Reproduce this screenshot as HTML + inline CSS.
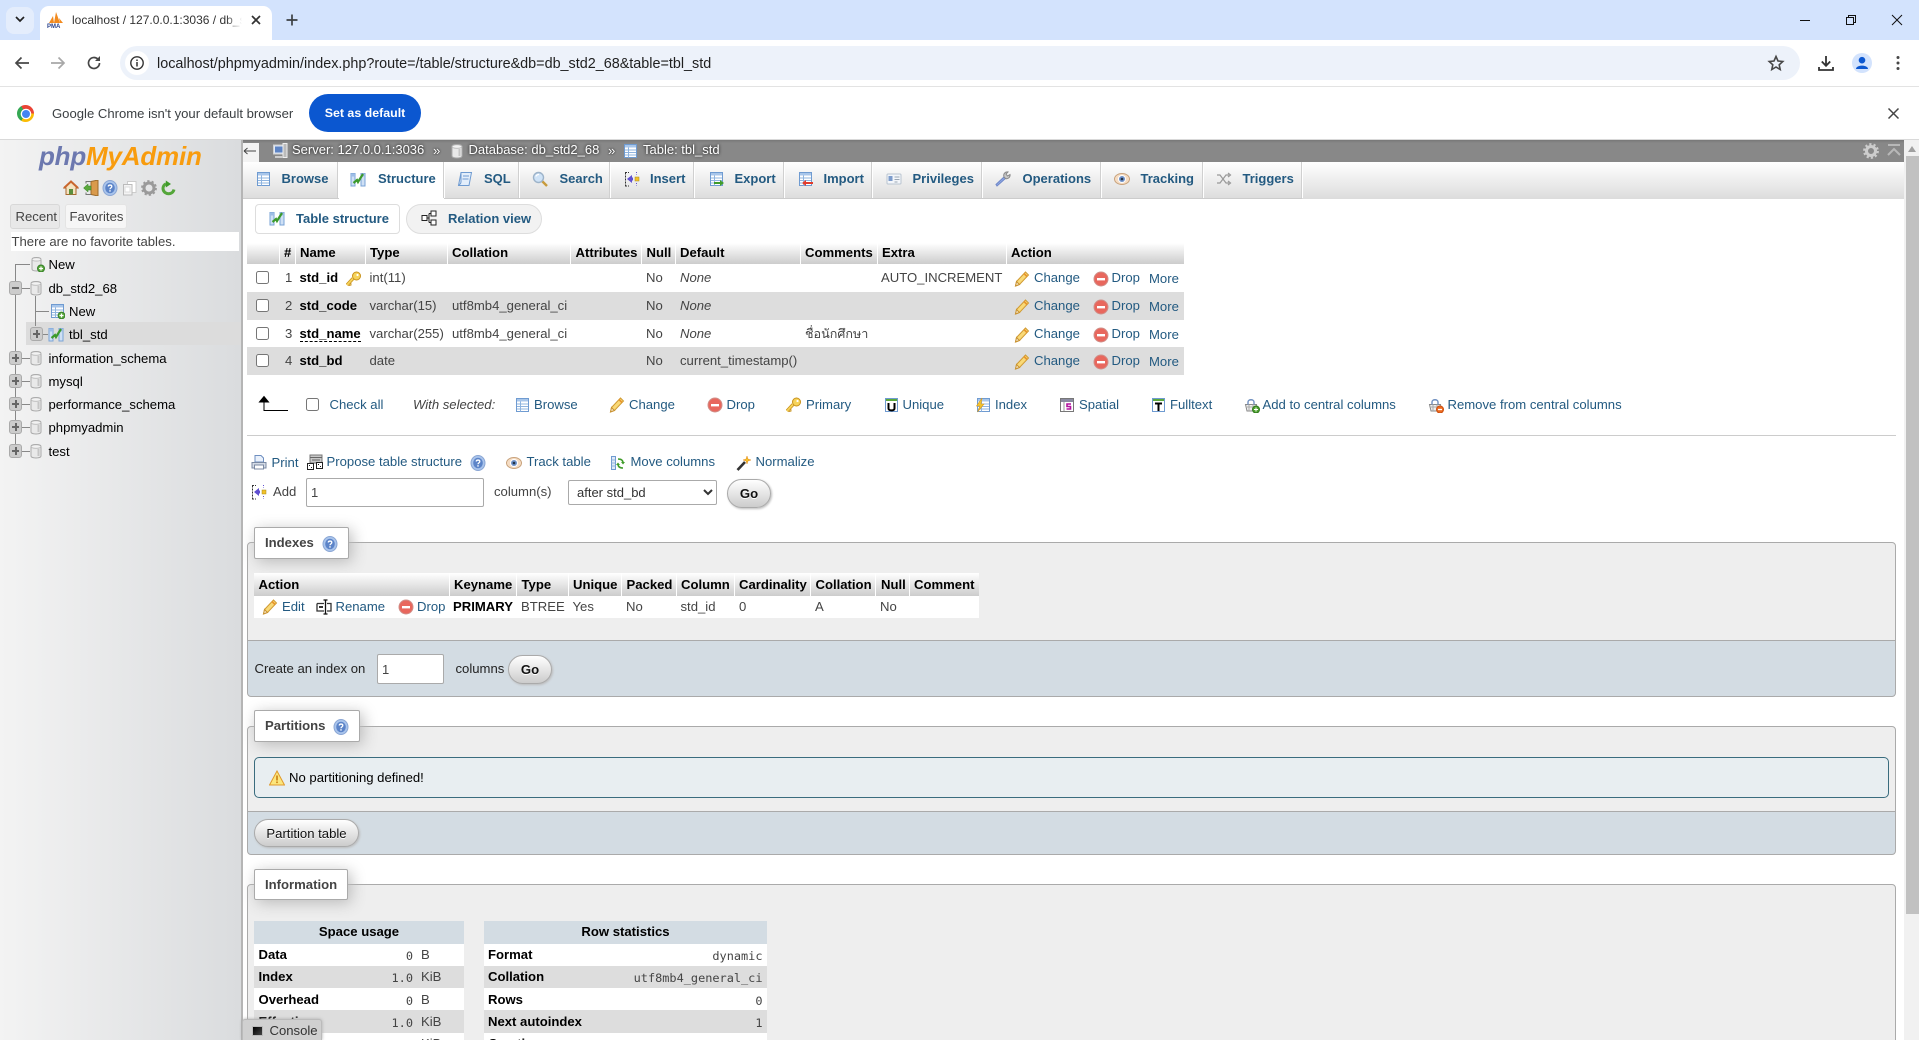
<!DOCTYPE html>
<html lang="en"><head><meta charset="utf-8"><title>localhost / 127.0.0.1:3036 / db_std2_68 / tbl_std</title>
<style>
html,body{margin:0;padding:0;width:1919px;height:1040px;overflow:hidden;background:#fff}
body{position:relative;font:13.12px/16px "Liberation Sans","Noto Sans CJK SC",sans-serif;color:#444}
.t,.r,.i,.b{position:absolute}
.t{white-space:nowrap;line-height:16px}
.l{color:#235a81}
.k{color:#000;font-weight:bold}
.m{font-family:"DejaVu Sans Mono","Liberation Mono",monospace;font-size:11.9px}
.i{width:16px;height:16px;overflow:visible}
.b{box-sizing:border-box}
.h{background:linear-gradient(#fff,#ccc)}
.s{background:#fff;width:1px}
.tb{font-weight:bold;color:#235a81;font-size:13px}
.sep{position:absolute;top:162px;height:36px;width:1px;background:#fff;box-shadow:-1px 0 0 #d0d0d0}
.fs{position:absolute;left:247px;width:1649px;box-sizing:border-box;background:#eee;border:1px solid #aaa;border-radius:4px 4px 0 0}
.ft{position:absolute;left:247px;width:1649px;box-sizing:border-box;background:#d3dce3;border:1px solid #aaa;border-radius:0 0 4px 4px}
.lg{position:absolute;box-sizing:border-box;background:#fff;border:1px solid #aaa;border-radius:2px;box-shadow:3px 3px 15px #bbb}
.btn{position:absolute;box-sizing:border-box;background:linear-gradient(#fff,#ccc);border:1px solid #aaa;border-radius:20px;color:#111;text-align:center;box-shadow:1px 1px 2px #bbb;text-shadow:0 1px 0 #fff}
input[type=checkbox]{position:absolute;margin:0;width:13px;height:13px}
input[type=text]{position:absolute;box-sizing:border-box;margin:0;border:1px solid #aaa;border-radius:2px;padding:0 0 0 4px;font:13px "Liberation Sans",sans-serif;color:#444;background:#fff}
select{position:absolute;box-sizing:border-box;margin:0;border:1px solid #aaa;border-radius:2px;padding:0 4px;font:13px "Liberation Sans",sans-serif;color:#333;background:#fff}
.hl{position:absolute;height:1px;background:#888}
.vl{position:absolute;width:1px;background:#888}
.pm{position:absolute;left:9px;width:13px;height:14px;box-sizing:border-box;background:#ccc;border:1px solid #aaa;border-radius:3px}
.pm:before{content:"";position:absolute;left:2px;right:2px;top:5px;height:2px;background:#666}
.pm.p:after{content:"";position:absolute;top:2px;bottom:2px;left:4.500px;width:2px;background:#666}
</style></head><body>
<svg width="0" height="0" style="position:absolute">
<defs>
<symbol id="pen" viewBox="0 0 16 16"><path d="M1.500 15 2.500 10.500 11.500 1 14.500 4 5.500 13.500Z" fill="#f9d977" stroke="#d09a32"/><path d="M1.500 15 2.500 10.500 5.500 13.500Z" fill="#f6e6c6" stroke="#c89232"/><path d="M10 2.500 13 5.500" stroke="#e8942a" stroke-width="1.600"/></symbol>
<symbol id="drop" viewBox="0 0 16 16"><circle cx="8" cy="8" r="7" fill="#e8675d" stroke="#d0908a"/><rect x="4" y="7" width="8" height="2.400" fill="#fff"/></symbol>
<symbol id="key" viewBox="0 0 16 16"><path d="M1 14 7 7.500" stroke="#c9921a" stroke-width="3.400"/><path d="M1 14 7 7.500" stroke="#f6d35b" stroke-width="1.800"/><circle cx="10.500" cy="5" r="4" fill="#f6d35b" stroke="#c9921a"/><circle cx="11.500" cy="4" r="1.100" fill="#fff"/><path d="M3 14.500 5 14 4.800 12" stroke="#c9921a" fill="none"/></symbol>
<symbol id="db" viewBox="0 0 16 16"><path d="M3 3.500C3 .8 13 .8 13 3.500V13C13 15.600 3 15.600 3 13Z" fill="#e9e9e9" stroke="#aaa"/><path d="M3 3.500C3 5.800 13 5.800 13 3.500" fill="#fafafa" stroke="#bbb"/><path d="M10.500 6V13" stroke="#c5c5c5" stroke-width="2"/></symbol>
<symbol id="dbn" viewBox="0 0 16 16"><path d="M3 3.500C3 .8 12 .8 12 3.500V13C12 15.600 3 15.600 3 13Z" fill="#e9e9e9" stroke="#aaa"/><path d="M3 3.500C3 5.500 12 5.500 12 3.500" fill="#fafafa" stroke="#bbb"/><circle cx="12" cy="12.500" r="3.500" fill="#5aa83c" stroke="#37812a"/><path d="M10 12.500h4M12 10.500v4" stroke="#fff" stroke-width="1.200"/></symbol>
<symbol id="grid" viewBox="0 0 16 16"><rect x="2.500" y="1.500" width="12" height="13" fill="#fff" stroke="#6f9bd1"/><rect x="3" y="2" width="11" height="2.500" fill="#a8c6ea"/><path d="M3 7h11M3 9.500h11M3 12h11M6.500 4.500v10" stroke="#8fb4df"/></symbol>
<symbol id="gridn" viewBox="0 0 16 16"><use href="#grid"/><circle cx="12.500" cy="12.500" r="3.400" fill="#5aa83c" stroke="#37812a"/><path d="M10.500 12.500h4M12.500 10.500v4" stroke="#fff" stroke-width="1.200"/></symbol>
<symbol id="str" viewBox="0 0 16 16"><path d="M1 2.500h4V15H1zM11 2.500h4V15h-4z" fill="#cfe0f5" stroke="#7aa3d6"/><path d="M1 2.500h4v3H1zM11 2.500h4v3h-4z" fill="#9dbde6"/><path d="M3.500 12 7 9 8 11 13 3" fill="none" stroke="#3c9a2c" stroke-width="2.200"/></symbol>
<symbol id="sql" viewBox="0 0 16 16"><path d="M4 1.500H14.500L12 14.500H1.500Z" fill="#e3eefb" stroke="#6f9bd1"/><path d="M1.500 14.500C3 13 4 13 4 11L4 1.500M6 5h6M5.500 8h6" fill="none" stroke="#6f9bd1"/></symbol>
<symbol id="find" viewBox="0 0 16 16"><path d="M9.500 9.500 15 15" stroke="#c89b3c" stroke-width="2.400"/><circle cx="6.500" cy="6.500" r="5" fill="#cfe3f7" stroke="#9db3c9" stroke-width="1.400"/><path d="M3.800 5.500C4.500 4 6 3.500 7 3.500" stroke="#fff" fill="none" stroke-width="1.200"/></symbol>
<symbol id="ins" viewBox="0 0 16 16"><path d="M1 1.500h4M1 15h4M1.500 1.500V15" fill="none" stroke="#333" stroke-dasharray="2 1"/><path d="M3 8 8 4v2.500h1v3H8V12Z" fill="#5f4fd0"/><rect x="11" y="6" width="4" height="4" fill="#f1c12a" stroke="#a8891a" stroke-width=".5"/><path d="M12.500 1v2.500M12.500 12v2.500" stroke="#5f4fd0" stroke-dasharray="1 1"/></symbol>
<symbol id="exp" viewBox="0 0 16 16"><use href="#grid"/><path d="M6 11h6V9l4 3-4 3v-2H6z" fill="#3f9b2a"/></symbol>
<symbol id="imp" viewBox="0 0 16 16"><use href="#grid"/><path d="M16 11h-7V9l-4 3 4 3v-2h7z" fill="#e03c2d"/></symbol>
<symbol id="priv" viewBox="0 0 16 16"><rect x="1" y="3" width="14" height="10" rx="1" fill="#f3f6fa" stroke="#b9c4d0"/><rect x="2.500" y="5" width="4" height="5" fill="#7d9ccc"/><path d="M8.500 6h5M8.500 8.500h5M8.500 11h3" stroke="#9aa6b4"/></symbol>
<symbol id="ops" viewBox="0 0 16 16"><path d="M2 15 1 13.500 9.500 5.500 11 7Z" fill="#8fa8e3" stroke="#6f87c8"/><path d="M9 6C8 3 10 .5 13 1L11 3 12.500 5 15 3.500C15.500 6 13 8.500 10.500 7.500Z" fill="#c8c8c8" stroke="#888"/></symbol>
<symbol id="eye" viewBox="0 0 16 16"><ellipse cx="8" cy="8" rx="7.500" ry="5.500" fill="#f5dcc3" stroke="#c8a27c"/><circle cx="8" cy="8" r="4" fill="#fff"/><circle cx="8" cy="8" r="3" fill="#6d90c8"/><circle cx="8" cy="8" r="1.300" fill="#234"/></symbol>
<symbol id="trg" viewBox="0 0 16 16"><path d="M1 4h3l6 8h3M1 12h3l6-8h3M12 2l2.500 2L12 6M12 10l2.500 2-2.500 2" fill="none" stroke="#999" stroke-width="1.200"/></symbol>
<symbol id="help" viewBox="0 0 16 16"><ellipse cx="8" cy="8" rx="7" ry="7.500" fill="#a9c4ec" stroke="#8aa6d4"/><ellipse cx="8" cy="8" rx="4.800" ry="5.300" fill="#5c84c8"/><path d="M6.300 6.500C6.300 4.600 9.800 4.600 9.800 6.500 9.800 8 8 7.800 8 9.300" fill="none" stroke="#fff" stroke-width="1.300"/><rect x="7.300" y="10.200" width="1.400" height="1.400" fill="#fff"/></symbol>
<symbol id="move" viewBox="0 0 16 16"><path d="M1.500 1.500h4v13h-4z" fill="#dfe9f7" stroke="#6f9bd1"/><path d="M1.500 5h4M1.500 8h4M1.500 11h4" stroke="#8fb4df"/><path d="M8 4c4 0 5 2 5 4M13 13c-3 0-5-1-5-4" fill="none" stroke="#3f9b2a" stroke-width="1.600"/><path d="M11 7l2 2.500L15 7M6 10l2-2.500L10 10" fill="#3f9b2a"/></symbol>
<symbol id="wand" viewBox="0 0 16 16"><path d="M1.500 15 9 7" stroke="#333" stroke-width="2.600"/><path d="M11 1l1 3 3 1-3 1-1 3-1-3-3-1 3-1z" fill="#f5c02c" stroke="#e28a1c" stroke-width=".5"/></symbol>
<symbol id="print" viewBox="0 0 16 16"><path d="M4 1.500h6l2.500 2.500V8h-8.500Z" fill="#eaf1fb" stroke="#6f8fc0"/><path d="M1 8.500h14V14H1Z" fill="#d4dbe6" stroke="#7b8aa3"/><rect x="3.500" y="11" width="9" height="4" fill="#fff" stroke="#7b8aa3"/></symbol>
<symbol id="prop" viewBox="0 0 16 16"><rect x="3" y="1" width="12" height="8" fill="#c8c8c8" stroke="#777"/><path d="M3 3.500h12M5 6h8" stroke="#666"/><rect x=".5" y="9.500" width="6" height="6" fill="#fff" stroke="#222"/><rect x="9.500" y="8.500" width="6" height="6" fill="#fff" stroke="#222"/><path d="M2 11h1v1H2zM4 13h1v1H4zM11 10h1v1h-1zM13 12h1v1h-1z" fill="#222"/></symbol>
<symbol id="ren" viewBox="0 0 16 16"><path d="M1 4.500h7M8 12H1V4.500M11 4.500h4V12h-4" fill="none" stroke="#333" stroke-width="1.300"/><path d="M9.500 1.500V15M7.500 1h4M7.500 15h4" stroke="#111" stroke-width="1.300" fill="none"/><path d="M3 8h4" stroke="#333" stroke-width="2"/></symbol>
<symbol id="uni" viewBox="0 0 16 16"><rect x="2.500" y="1.500" width="12" height="13" fill="#fff" stroke="#6f9bd1"/><rect x="3" y="2" width="11" height="2" fill="#5aa83c"/><path d="M5.500 6v5.500c0 2.500 6 2.500 6 0V6" fill="none" stroke="#000" stroke-width="2"/></symbol>
<symbol id="idx" viewBox="0 0 16 16"><use href="#grid"/><path d="M7 1 1.500 9H5L2.500 15 9 7H6Z" fill="#f3c52f" stroke="#d89a1d" stroke-width=".6"/></symbol>
<symbol id="spa" viewBox="0 0 16 16"><rect x="1.500" y="1.500" width="13" height="13" fill="#fff" stroke="#777"/><rect x="2" y="2" width="12" height="3" fill="#8a8aa0"/><path d="M12 7H8v2.500h3.500V12H7.500" fill="none" stroke="#b3129f" stroke-width="1.600"/><path d="M5 5v9" stroke="#999"/></symbol>
<symbol id="ful" viewBox="0 0 16 16"><rect x="2.500" y="1.500" width="12" height="13" fill="#fff" stroke="#6f9bd1"/><rect x="3" y="2" width="11" height="2" fill="#5aa83c"/><path d="M5 6.500h7M8.500 6.500V14" stroke="#000" stroke-width="2"/></symbol>
<symbol id="bag" viewBox="0 0 16 16"><path d="M1.500 7.500h11L11 14H3Z" fill="#eee" stroke="#888"/><path d="M4 7.500V5C4 2 10 2 10 5V7.500" fill="none" stroke="#6f8fc0" stroke-width="1.400"/><path d="M3 10h9M5 7.500V14M9 7.500V14" stroke="#aaa"/></symbol>
<symbol id="baga" viewBox="0 0 16 16"><use href="#bag"/><circle cx="12" cy="12.500" r="3.500" fill="#4ea02e" stroke="#2f7a1e"/><path d="M10 12.500h4M12 10.500v4" stroke="#fff"/></symbol>
<symbol id="bagr" viewBox="0 0 16 16"><use href="#bag"/><circle cx="12" cy="12.500" r="3.500" fill="#ee6a1f" stroke="#c94f10"/><path d="M10 12.500h4" stroke="#fff" stroke-width="1.300"/></symbol>
<symbol id="warn" viewBox="0 0 16 16"><path d="M8 1 15.500 15H.5Z" fill="#fbe67d" stroke="#e0992a"/><rect x="7.200" y="5.500" width="1.600" height="5" fill="#c97d12"/><rect x="7.200" y="11.500" width="1.600" height="1.600" fill="#c97d12"/></symbol>
<symbol id="home" viewBox="0 0 16 16"><path d="M8 1.500 1 8h2v6.500h10V8h2Z" fill="#f4e3c2" stroke="#a9682f"/><path d="M1 8 8 1.500 15 8" fill="none" stroke="#c9662d" stroke-width="2"/><rect x="6" y="9" width="4" height="5.500" fill="#5a8f3c"/></symbol>
<symbol id="exit" viewBox="0 0 16 16"><path d="M8 1.500 15 0V16L8 14.500Z" fill="#d99a4c" stroke="#9a6a2c"/><path d="M.5 8 5 4v2h3v4H5v2Z" fill="#5aa83c" stroke="#37812a" stroke-width=".5"/><path d="M3 3.500V1.500h5M3 12.500v2h5" stroke="#777" fill="none"/></symbol>
<symbol id="doc" viewBox="0 0 16 16"><path d="M5.500 1.500H14V12.500H5.500Z" fill="#fff" stroke="#ccc"/><path d="M1.500 4.500H10V15H1.500Z" fill="#f4f4f4" stroke="#bbb"/><path d="M3 7h5v5H3z" fill="#fff" stroke="#ddd"/></symbol>
<symbol id="gear" viewBox="0 0 16 16"><circle cx="8" cy="8" r="5" fill="none" stroke="#9a9a9a" stroke-width="3"/><circle cx="8" cy="8" r="6.800" fill="none" stroke="#9a9a9a" stroke-width="2.200" stroke-dasharray="2.200 2.100"/></symbol>
<symbol id="rel" viewBox="0 0 16 16"><path d="M13 9.500C12 13.500 7.500 15 4 12.500 1 9.800 1.500 5.500 5 3.800" fill="none" stroke="#54a63a" stroke-width="3"/><path d="M4.800 .5 10 4 4.800 7.500Z" fill="#3f9b2a"/></symbol>
<symbol id="srv" viewBox="0 0 16 16"><rect x="1.500" y="2" width="11" height="9" fill="#dfe9f6" stroke="#d0d0d0"/><rect x="3" y="3.500" width="8" height="6" fill="#5e84c4"/><rect x="11" y=".5" width="4" height="14" fill="#bbb" stroke="#eee"/><path d="M3 13h8v2H3z" fill="#ccc"/></symbol>
<symbol id="rv" viewBox="0 0 16 16"><rect x="1" y="5.500" width="5" height="5" fill="#fff" stroke="#222"/><rect x="10" y="1" width="5" height="5" fill="#fff" stroke="#222"/><rect x="10" y="10" width="5" height="5" fill="#fff" stroke="#222"/><path d="M6 8h2M8 3.500V12.500M8 3.500h2M8 12.500h2" stroke="#222" fill="none"/></symbol>
</defs></svg>

<!-- Chrome frame -->
<div class="b" style="left:0;top:0;width:1919px;height:40px;background:#d3e3fd"></div>
<div class="b" style="left:6px;top:7px;width:28px;height:27px;background:#e4edfc;border-radius:8px"></div>
<svg class="i" style="left:14px;top:15px;width:12px;height:10px"><path d="M2 2 6 6 10 2" fill="none" stroke="#222" stroke-width="1.700"/></svg>
<div class="b" style="left:40px;top:6px;width:232px;height:36px;background:#fff;border-radius:9px 9px 0 0"></div>
<svg class="i" style="left:47px;top:12px;width:18px;height:16px" viewBox="0 0 18 16"><path d="M2 11 6 4 7 11ZM7 11 9 0 13 11ZM13 11 12 6 16 11Z" fill="#f28a1e"/><text x="0" y="16" font-size="6" font-weight="bold" fill="#27408b" font-family="Liberation Sans">PMA</text></svg>
<span class="t" style="left:72px;top:12px;font-size:12px;color:#333;width:170px;overflow:hidden">localhost / 127.0.0.1:3036 / db_std2_68 / tbl</span>
<div class="b" style="left:226px;top:10px;width:16px;height:20px;background:linear-gradient(to right,rgba(255,255,255,0),#fff)"></div>
<svg class="i" style="left:250px;top:14px;width:12px;height:12px"><path d="M2 2 10 10M10 2 2 10" stroke="#333" stroke-width="1.700"/></svg>
<svg class="i" style="left:286px;top:14px;width:12px;height:12px"><path d="M6 .5V11.500M.5 6H11.500" stroke="#3c4043" stroke-width="1.700"/></svg>
<svg class="i" style="left:1799px;top:15px;width:12px;height:10px"><path d="M1 5.500H11" stroke="#111"/></svg>
<svg class="i" style="left:1845px;top:14px;width:12px;height:12px"><path d="M1.500 3.500H8.500V10.500H1.500ZM3.500 3.500V1.500H10.500V8.500H8.500" fill="none" stroke="#111"/></svg>
<svg class="i" style="left:1891px;top:14px;width:12px;height:12px"><path d="M1 1 11 11M11 1 1 11" stroke="#111"/></svg>

<div class="b" style="left:0;top:40px;width:1919px;height:47px;background:#fff;border-radius:9px 9px 0 0;border-bottom:1px solid #e3e3e3"></div>
<svg class="i" style="left:14px;top:55px"><path d="M15 8H2M7.500 2.500 2 8 7.500 13.500" fill="none" stroke="#474747" stroke-width="1.700"/></svg>
<svg class="i" style="left:50px;top:55px"><path d="M1 8H14M8.500 2.500 14 8 8.500 13.500" fill="none" stroke="#a8a8a8" stroke-width="1.700"/></svg>
<svg class="i" style="left:86px;top:55px"><path d="M13.500 8A5.500 5.500 0 1 1 11.800 4" fill="none" stroke="#474747" stroke-width="1.700"/><path d="M14 1V6H9" fill="#474747"/></svg>
<div class="b" style="left:120px;top:46px;width:1680px;height:34px;background:#edf2fa;border-radius:17px"></div>
<div class="b" style="left:125px;top:51px;width:24px;height:24px;background:#fff;border-radius:12px"></div>
<svg class="i" style="left:129px;top:55px"><circle cx="8" cy="8" r="6.200" fill="none" stroke="#333" stroke-width="1.400"/><path d="M8 7V11.500M8 4.500V6" stroke="#333" stroke-width="1.500"/></svg>
<span class="t" style="left:157px;top:56px;font-size:14.390px;color:#1f1f1f">localhost/phpmyadmin/index.php?route=/table/structure&amp;db=db_std2_68&amp;table=tbl_std</span>
<svg class="i" style="left:1768px;top:55px"><path d="M8 1.500 10 6 14.800 6.500 11.200 9.800 12.200 14.500 8 12 3.800 14.500 4.800 9.800 1.200 6.500 6 6Z" fill="none" stroke="#474747" stroke-width="1.600"/></svg>
<svg class="i" style="left:1818px;top:55px"><path d="M8 1V10.500M3.800 6.500 8 10.800 12.200 6.500M1 12V15H15V12" fill="none" stroke="#333" stroke-width="1.800"/></svg>
<div class="b" style="left:1852px;top:53px;width:20px;height:20px;background:#d3e3fd;border-radius:10px"></div>
<svg class="i" style="left:1854px;top:55px"><circle cx="8" cy="5.200" r="3.300" fill="#0b57d0"/><path d="M2 14C2 9.500 14 9.500 14 14Z" fill="#0b57d0"/></svg>
<svg class="i" style="left:1890px;top:55px"><circle cx="8" cy="2.500" r="1.500" fill="#474747"/><circle cx="8" cy="8" r="1.500" fill="#474747"/><circle cx="8" cy="13.500" r="1.500" fill="#474747"/></svg>

<!-- Infobar -->
<div class="b" style="left:0;top:87px;width:1919px;height:53px;background:#fff;border-bottom:1px solid #d9d9d9"></div>
<div class="b" style="left:17px;top:105px;width:17px;height:17px;border-radius:50%;background:conic-gradient(#ea4335 0 90deg,#fbbc04 90deg 210deg,#34a853 210deg 330deg,#ea4335 330deg)"></div>
<div class="b" style="left:21.500px;top:109.500px;width:8px;height:8px;border-radius:50%;background:#4285f4;box-shadow:0 0 0 1.300px #fff"></div>
<span class="t" style="left:52px;top:106px;font-size:13.100px;color:#3c4043">Google Chrome isn't your default browser</span>
<div class="b" style="left:309px;top:94px;width:112px;height:38px;background:#0b57d0;border-radius:19px;color:#fff;font-weight:bold;font-size:12.400px;line-height:38px;text-align:center">Set as default</div>
<svg class="i" style="left:1887px;top:107px;width:13px;height:13px"><path d="M1.500 1.500 11.500 11.500M11.500 1.500 1.500 11.500" stroke="#444" stroke-width="1.500"/></svg>

<!-- Navigation panel -->
<div class="b" style="left:0;top:140px;width:241px;height:900px;background:linear-gradient(to right,#f3f3f3,#dadcde)"></div>
<div class="b" style="left:241px;top:140px;width:2px;height:900px;background:#b5b5b5"></div>
<span class="t" style="left:39px;top:142px;font:italic bold 26px/28px 'Liberation Sans',sans-serif;color:#6c78af;letter-spacing:-.2px">php<span style="color:#f89c0e">MyAdmin</span></span>
<svg class="i" style="left:63px;top:180px"><use href="#home"/></svg>
<svg class="i" style="left:83px;top:180px"><use href="#exit"/></svg>
<svg class="i" style="left:102px;top:180px"><use href="#help"/></svg>
<svg class="i" style="left:122px;top:180px"><use href="#doc"/></svg>
<svg class="i" style="left:141px;top:180px"><use href="#gear"/></svg>
<svg class="i" style="left:161px;top:180px"><use href="#rel"/></svg>
<div class="b" style="left:10px;top:204px;width:50px;height:25px;background:#e8e8e8;border:1px solid #d8d8d8;border-radius:3px"></div>
<span class="t" style="left:15.500px;top:209px">Recent</span>
<div class="b" style="left:65px;top:204px;width:62px;height:25px;background:#f6f6f6;border:1px solid #e4e4e4;border-radius:3px"></div>
<span class="t" style="left:69.500px;top:209px">Favorites</span>
<div class="b" style="left:11px;top:232px;width:228px;height:19px;background:#fff"></div>
<span class="t" style="left:11.500px;top:234px">There are no favorite tables.</span>

<div class="b" style="left:26px;top:322px;width:215px;height:23px;background:#dcdcdc"></div>
<div class="vl" style="left:15px;top:264px;height:187px"></div>
<div class="hl" style="left:15px;top:264px;width:15px"></div>
<div class="hl" style="left:22px;top:288px;width:8px"></div>
<div class="hl" style="left:22px;top:358px;width:8px"></div>
<div class="hl" style="left:22px;top:381px;width:8px"></div>
<div class="hl" style="left:22px;top:404px;width:8px"></div>
<div class="hl" style="left:22px;top:427px;width:8px"></div>
<div class="hl" style="left:22px;top:451px;width:8px"></div>
<div class="vl" style="left:35px;top:296px;height:30px"></div>
<div class="hl" style="left:35px;top:311px;width:14px"></div>
<div class="hl" style="left:42px;top:334px;width:6px"></div>
<div class="pm" style="top:281px"></div>
<div class="pm p" style="left:30px;top:327px"></div>
<div class="pm p" style="top:351px"></div>
<div class="pm p" style="top:374px"></div>
<div class="pm p" style="top:397px"></div>
<div class="pm p" style="top:420px"></div>
<div class="pm p" style="top:444px"></div>
<svg class="i" style="left:29px;top:256px"><use href="#dbn"/></svg><span class="t" style="left:48.500px;top:257px;color:#000">New</span>
<svg class="i" style="left:28px;top:280px"><use href="#db"/></svg><span class="t" style="left:48.500px;top:281px;color:#000">db_std2_68</span>
<svg class="i" style="left:49px;top:303px"><use href="#gridn"/></svg><span class="t" style="left:69px;top:304px;color:#000">New</span>
<svg class="i" style="left:48px;top:326px"><use href="#str"/></svg><span class="t" style="left:69px;top:327px;color:#000">tbl_std</span>
<svg class="i" style="left:28px;top:350px"><use href="#db"/></svg><span class="t" style="left:48.500px;top:351px;color:#000">information_schema</span>
<svg class="i" style="left:28px;top:373px"><use href="#db"/></svg><span class="t" style="left:48.500px;top:374px;color:#000">mysql</span>
<svg class="i" style="left:28px;top:396px"><use href="#db"/></svg><span class="t" style="left:48.500px;top:397px;color:#000">performance_schema</span>
<svg class="i" style="left:28px;top:419px"><use href="#db"/></svg><span class="t" style="left:48.500px;top:420px;color:#000">phpmyadmin</span>
<svg class="i" style="left:28px;top:443px"><use href="#db"/></svg><span class="t" style="left:48.500px;top:444px;color:#000">test</span>

<!-- Breadcrumb -->
<div class="b" style="left:243px;top:140px;width:1661px;height:22px;background:linear-gradient(#777 0,#888 3px)"></div>
<div class="b" style="left:243px;top:143px;width:16px;height:19px;background:#f3f3f3"></div>
<svg class="i" style="left:243px;top:146px;width:16px;height:10px"><path d="M1 5H13M1 5 4.500 2M1 5 4.500 8" fill="none" stroke="#444"/></svg>
<svg class="i" style="left:272px;top:143px"><use href="#srv"/></svg>
<span class="t" style="left:292px;top:142px;color:#fff;text-shadow:0 0 3px #000;font-size:13px">Server: 127.0.0.1:3036</span>
<span class="t" style="left:433px;top:143px;color:#fff;text-shadow:0 0 2px #000">»</span>
<svg class="i" style="left:449px;top:143px"><use href="#db"/></svg>
<span class="t" style="left:468.500px;top:142px;color:#fff;text-shadow:0 0 3px #000;font-size:13px">Database: db_std2_68</span>
<span class="t" style="left:608px;top:143px;color:#fff;text-shadow:0 0 2px #000">»</span>
<svg class="i" style="left:622px;top:143px"><use href="#grid"/></svg>
<span class="t" style="left:643px;top:142px;color:#fff;text-shadow:0 0 3px #000;font-size:13px">Table: tbl_std</span>
<svg class="i" style="left:1863px;top:143px;opacity:.9"><circle cx="8" cy="8" r="4.500" fill="none" stroke="#d5d5d5" stroke-width="3"/><circle cx="8" cy="8" r="6.800" fill="none" stroke="#d5d5d5" stroke-width="2.200" stroke-dasharray="2.200 2.100"/></svg>
<svg class="i" style="left:1886px;top:143px"><path d="M2 2H14M2 12 8 6 14 12" fill="none" stroke="#b8b8b8" stroke-width="2"/></svg>

<!-- Scrollbar -->
<div class="b" style="left:1904px;top:140px;width:15px;height:900px;background:#f1f1f1"></div>
<div class="b" style="left:1906px;top:156px;width:13px;height:758px;background:#c1c1c1"></div>
<svg class="i" style="left:1907px;top:145px;width:10px;height:8px"><path d="M1 7 5 1 9 7Z" fill="#a0a0a0"/></svg>

<!-- Top tabs -->
<div class="b" style="left:243px;top:162px;width:1661px;height:37px;background:linear-gradient(#fff,#dcdcdc)"></div>
<div class="b" style="left:243px;top:198px;width:1059px;height:1px;background:#ccc"></div>
<div class="b" style="left:339px;top:162px;width:105px;height:37px;background:#fff"></div>
<div class="sep" style="left:338px"></div><div class="sep" style="left:444px"></div><div class="sep" style="left:519px"></div><div class="sep" style="left:610px"></div><div class="sep" style="left:694px"></div><div class="sep" style="left:784px"></div><div class="sep" style="left:872px"></div><div class="sep" style="left:982px"></div><div class="sep" style="left:1101px"></div><div class="sep" style="left:1203px"></div><div class="sep" style="left:1302px"></div>
<svg class="i" style="left:255px;top:171px"><use href="#grid"/></svg><span class="t tb" style="left:281.500px;top:171px">Browse</span>
<svg class="i" style="left:350px;top:171px"><use href="#str"/></svg><span class="t tb" style="left:378px;top:171px">Structure</span>
<svg class="i" style="left:457px;top:171px"><use href="#sql"/></svg><span class="t tb" style="left:484px;top:171px">SQL</span>
<svg class="i" style="left:532px;top:171px"><use href="#find"/></svg><span class="t tb" style="left:559.500px;top:171px">Search</span>
<svg class="i" style="left:624px;top:171px"><use href="#ins"/></svg><span class="t tb" style="left:650px;top:171px">Insert</span>
<svg class="i" style="left:708px;top:171px"><use href="#exp"/></svg><span class="t tb" style="left:734.500px;top:171px">Export</span>
<svg class="i" style="left:797px;top:171px"><use href="#imp"/></svg><span class="t tb" style="left:823.500px;top:171px">Import</span>
<svg class="i" style="left:886px;top:171px"><use href="#priv"/></svg><span class="t tb" style="left:912.500px;top:171px">Privileges</span>
<svg class="i" style="left:995px;top:171px"><use href="#ops"/></svg><span class="t tb" style="left:1022.500px;top:171px">Operations</span>
<svg class="i" style="left:1114px;top:171px"><use href="#eye"/></svg><span class="t tb" style="left:1140.500px;top:171px">Tracking</span>
<svg class="i" style="left:1216px;top:171px"><use href="#trg"/></svg><span class="t tb" style="left:1242.500px;top:171px">Triggers</span>

<!-- Sub tabs -->
<div class="b" style="left:255px;top:204px;width:145px;height:30px;background:#fff;border:1px solid #ddd;border-radius:4px"></div>
<svg class="i" style="left:269px;top:210px"><use href="#str"/></svg><span class="t tb" style="left:296px;top:211px">Table structure</span>
<div class="b" style="left:406px;top:204px;width:136px;height:30px;background:#f2f2f2;border:1px solid #ddd;border-radius:15px"></div>
<svg class="i" style="left:421px;top:210px"><use href="#rv"/></svg><span class="t tb" style="left:448px;top:211px">Relation view</span>

<!-- Structure table -->
<div class="b h" style="left:247px;top:243px;width:937px;height:21px"></div>
<div class="b s" style="left:279px;top:243px;height:21px"></div><div class="b s" style="left:295px;top:243px;height:21px"></div><div class="b s" style="left:365px;top:243px;height:21px"></div><div class="b s" style="left:447px;top:243px;height:21px"></div><div class="b s" style="left:570px;top:243px;height:21px"></div><div class="b s" style="left:641px;top:243px;height:21px"></div><div class="b s" style="left:675px;top:243px;height:21px"></div><div class="b s" style="left:800px;top:243px;height:21px"></div><div class="b s" style="left:877px;top:243px;height:21px"></div><div class="b s" style="left:1006px;top:243px;height:21px"></div>
<span class="t k" style="left:284px;top:245px">#</span><span class="t k" style="left:300px;top:245px">Name</span><span class="t k" style="left:370px;top:245px">Type</span><span class="t k" style="left:452px;top:245px">Collation</span><span class="t k" style="left:575.500px;top:245px">Attributes</span><span class="t k" style="left:646.500px;top:245px">Null</span><span class="t k" style="left:680px;top:245px">Default</span><span class="t k" style="left:805px;top:245px">Comments</span><span class="t k" style="left:882px;top:245px">Extra</span><span class="t k" style="left:1011px;top:245px">Action</span>
<div class="b" style="left:247px;top:292px;width:937px;height:28px;background:#ddd"></div>
<div class="b" style="left:247px;top:347px;width:937px;height:28px;background:#ddd"></div>

<input type="checkbox" style="left:256px;top:271px"><span class="t" style="left:285px;top:270px">1</span><span class="t k" style="left:299.500px;top:270px">std_id</span><svg class="i" style="left:346px;top:271px"><use href="#key"/></svg><span class="t" style="left:369.500px;top:270px">int(11)</span><span class="t" style="left:646px;top:270px">No</span><span class="t" style="left:680px;top:270px"><i>None</i></span><span class="t" style="left:881px;top:270px">AUTO_INCREMENT</span>
<svg class="i" style="left:1014px;top:271px"><use href="#pen"/></svg><span class="t l" style="left:1034px;top:270px">Change</span><svg class="i" style="left:1093px;top:271px"><use href="#drop"/></svg><span class="t l" style="left:1111.500px;top:270px">Drop</span><span class="t l" style="left:1149px;top:271px">More</span>

<input type="checkbox" style="left:256px;top:299px"><span class="t" style="left:285px;top:298px">2</span><span class="t k" style="left:299.500px;top:298px">std_code</span><span class="t" style="left:369.500px;top:298px">varchar(15)</span><span class="t" style="left:452px;top:298px">utf8mb4_general_ci</span><span class="t" style="left:646px;top:298px">No</span><span class="t" style="left:680px;top:298px"><i>None</i></span>
<svg class="i" style="left:1014px;top:299px"><use href="#pen"/></svg><span class="t l" style="left:1034px;top:298px">Change</span><svg class="i" style="left:1093px;top:299px"><use href="#drop"/></svg><span class="t l" style="left:1111.500px;top:298px">Drop</span><span class="t l" style="left:1149px;top:299px">More</span>

<input type="checkbox" style="left:256px;top:327px"><span class="t" style="left:285px;top:326px">3</span><span class="t k" style="left:299.500px;top:326px;border-bottom:1px dashed #000;line-height:15px">std_name</span><span class="t" style="left:369.500px;top:326px">varchar(255)</span><span class="t" style="left:452px;top:326px">utf8mb4_general_ci</span><span class="t" style="left:646px;top:326px">No</span><span class="t" style="left:680px;top:326px"><i>None</i></span><span class="t" style="left:805px;top:326px;font-size:12.600px;font-family:'Liberation Sans','Noto Sans CJK SC','DejaVu Sans',sans-serif">ชื่อนักศึกษา</span>
<svg class="i" style="left:1014px;top:327px"><use href="#pen"/></svg><span class="t l" style="left:1034px;top:326px">Change</span><svg class="i" style="left:1093px;top:327px"><use href="#drop"/></svg><span class="t l" style="left:1111.500px;top:326px">Drop</span><span class="t l" style="left:1149px;top:327px">More</span>

<input type="checkbox" style="left:256px;top:354px"><span class="t" style="left:285px;top:353px">4</span><span class="t k" style="left:299.500px;top:353px">std_bd</span><span class="t" style="left:369.500px;top:353px">date</span><span class="t" style="left:646px;top:353px">No</span><span class="t" style="left:680px;top:353px">current_timestamp()</span>
<svg class="i" style="left:1014px;top:354px"><use href="#pen"/></svg><span class="t l" style="left:1034px;top:353px">Change</span><svg class="i" style="left:1093px;top:354px"><use href="#drop"/></svg><span class="t l" style="left:1111.500px;top:353px">Drop</span><span class="t l" style="left:1149px;top:354px">More</span>

<!-- With selected -->
<svg class="i" style="left:259px;top:396px;width:29px;height:15px"><path d="M5 15V3M.5 6 5 .5 9.500 6ZM5 14.500H29" fill="#000" stroke="#000"/></svg>
<input type="checkbox" style="left:306px;top:398px"><span class="t l" style="left:329.500px;top:397px">Check all</span>
<span class="t" style="left:413px;top:397px;font-style:italic">With selected:</span>
<svg class="i" style="left:514px;top:397px"><use href="#grid"/></svg><span class="t l" style="left:534px;top:397px">Browse</span>
<svg class="i" style="left:609px;top:397px"><use href="#pen"/></svg><span class="t l" style="left:629px;top:397px">Change</span>
<svg class="i" style="left:707px;top:397px"><use href="#drop"/></svg><span class="t l" style="left:726.500px;top:397px">Drop</span>
<svg class="i" style="left:786px;top:397px"><use href="#key"/></svg><span class="t l" style="left:806px;top:397px">Primary</span>
<svg class="i" style="left:883px;top:397px"><use href="#uni"/></svg><span class="t l" style="left:902.500px;top:397px">Unique</span>
<svg class="i" style="left:975px;top:397px"><use href="#idx"/></svg><span class="t l" style="left:995px;top:397px">Index</span>
<svg class="i" style="left:1059px;top:397px"><use href="#spa"/></svg><span class="t l" style="left:1079px;top:397px">Spatial</span>
<svg class="i" style="left:1150px;top:397px"><use href="#ful"/></svg><span class="t l" style="left:1170px;top:397px">Fulltext</span>
<svg class="i" style="left:1244px;top:397px"><use href="#baga"/></svg><span class="t l" style="left:1262.500px;top:397px">Add to central columns</span>
<svg class="i" style="left:1428px;top:397px"><use href="#bagr"/></svg><span class="t l" style="left:1447.500px;top:397px">Remove from central columns</span>
<div class="b" style="left:247px;top:435px;width:1649px;height:1px;background:#ccc"></div>

<!-- Actions -->
<svg class="i" style="left:251px;top:454px"><use href="#print"/></svg><span class="t l" style="left:271.500px;top:455px">Print</span>
<svg class="i" style="left:307px;top:454px"><use href="#prop"/></svg><span class="t l" style="left:326.500px;top:454px">Propose table structure</span>
<svg class="i" style="left:470px;top:455px"><use href="#help"/></svg>
<svg class="i" style="left:506px;top:455px"><use href="#eye"/></svg><span class="t l" style="left:526.500px;top:454px">Track table</span>
<svg class="i" style="left:610px;top:455px"><use href="#move"/></svg><span class="t l" style="left:630.500px;top:454px">Move columns</span>
<svg class="i" style="left:736px;top:455px"><use href="#wand"/></svg><span class="t l" style="left:755.500px;top:454px">Normalize</span>
<svg class="i" style="left:251px;top:484px"><use href="#ins"/></svg><span class="t" style="left:273px;top:484px">Add</span>
<input type="text" value="1" style="left:306px;top:478px;width:178px;height:29px">
<span class="t" style="left:494px;top:484px">column(s)</span>
<select style="left:568px;top:480px;width:149px;height:25px"><option>after std_bd</option></select>
<div class="btn" style="left:727px;top:479px;width:44px;height:29px;line-height:27px;font-weight:bold">Go</div>

<!-- Indexes -->
<div class="fs" style="top:542px;height:99px"></div>
<div class="ft" style="top:640px;height:57px"></div>
<div class="lg" style="left:254px;top:527px;width:95px;height:32px"></div>
<span class="t" style="left:265px;top:535px;font-weight:bold">Indexes</span>
<svg class="i" style="left:322px;top:536px"><use href="#help"/></svg>
<div class="b h" style="left:254px;top:573px;width:725px;height:23px"></div>
<div class="b" style="left:254px;top:596px;width:725px;height:22px;background:#fff"></div>
<div class="b s" style="left:449px;top:573px;height:23px"></div><div class="b s" style="left:516px;top:573px;height:23px"></div><div class="b s" style="left:568px;top:573px;height:23px"></div><div class="b s" style="left:621px;top:573px;height:23px"></div><div class="b s" style="left:676px;top:573px;height:23px"></div><div class="b s" style="left:734px;top:573px;height:23px"></div><div class="b s" style="left:810px;top:573px;height:23px"></div><div class="b s" style="left:875px;top:573px;height:23px"></div><div class="b s" style="left:909px;top:573px;height:23px"></div>
<span class="t k" style="left:258.500px;top:577px">Action</span><span class="t k" style="left:454px;top:577px">Keyname</span><span class="t k" style="left:521.500px;top:577px">Type</span><span class="t k" style="left:573px;top:577px">Unique</span><span class="t k" style="left:626.500px;top:577px">Packed</span><span class="t k" style="left:681px;top:577px">Column</span><span class="t k" style="left:739px;top:577px">Cardinality</span><span class="t k" style="left:815.500px;top:577px">Collation</span><span class="t k" style="left:881px;top:577px">Null</span><span class="t k" style="left:914px;top:577px">Comment</span>
<svg class="i" style="left:262px;top:599px"><use href="#pen"/></svg><span class="t l" style="left:282px;top:599px">Edit</span>
<svg class="i" style="left:316px;top:599px"><use href="#ren"/></svg><span class="t l" style="left:335.500px;top:599px">Rename</span>
<svg class="i" style="left:398px;top:599px"><use href="#drop"/></svg><span class="t l" style="left:417px;top:599px">Drop</span>
<span class="t k" style="left:453px;top:599px">PRIMARY</span><span class="t" style="left:521px;top:599px">BTREE</span><span class="t" style="left:572.500px;top:599px">Yes</span><span class="t" style="left:626px;top:599px">No</span><span class="t" style="left:680.500px;top:599px">std_id</span><span class="t" style="left:739px;top:599px">0</span><span class="t" style="left:815px;top:599px">A</span><span class="t" style="left:880px;top:599px">No</span>
<span class="t" style="left:254.500px;top:661px;color:#222">Create an index on</span>
<input type="text" value="1" style="left:377px;top:654px;width:67px;height:30px">
<span class="t" style="left:455.500px;top:661px;color:#222">columns</span>
<div class="btn" style="left:508px;top:655px;width:44px;height:29px;line-height:27px;font-weight:bold">Go</div>

<!-- Partitions -->
<div class="fs" style="top:726px;height:87px"></div>
<div class="ft" style="top:811px;height:44px;background:#d3dce3"></div>
<div class="lg" style="left:254px;top:710px;width:106px;height:32px"></div>
<span class="t" style="left:265px;top:718px;font-weight:bold">Partitions</span>
<svg class="i" style="left:333px;top:719px"><use href="#help"/></svg>
<div class="b" style="left:254px;top:757px;width:1635px;height:41px;background:#e8eef1;border:1px solid #3a6c7e;border-radius:5px"></div>
<svg class="i" style="left:269px;top:770px"><use href="#warn"/></svg>
<span class="t" style="left:289px;top:770px;color:#000">No partitioning defined!</span>
<div class="btn" style="left:254px;top:819px;width:105px;height:28px;line-height:27px">Partition table</div>

<!-- Information -->
<div class="fs" style="top:884px;height:170px"></div>
<div class="lg" style="left:254px;top:869px;width:94px;height:31px"></div>
<span class="t" style="left:265px;top:877px;font-weight:bold">Information</span>

<div class="b" style="left:254px;top:921px;width:210px;height:23px;background:#d3dce3"></div>
<div class="b" style="left:254px;top:944px;width:210px;height:22px;background:#fff"></div>
<div class="b" style="left:254px;top:966px;width:210px;height:22px;background:#ddd"></div>
<div class="b" style="left:254px;top:988px;width:210px;height:22px;background:#fff"></div>
<div class="b" style="left:254px;top:1010px;width:210px;height:23px;background:#ddd"></div>
<div class="b" style="left:254px;top:1033px;width:210px;height:7px;background:#fff"></div>
<span class="t k" style="left:254px;top:924px;width:210px;text-align:center">Space usage</span>
<span class="t k" style="left:258.500px;top:947px">Data</span><span class="t m" style="left:363px;top:948px;width:50px;text-align:right">0</span><span class="t" style="left:421px;top:947px">B</span>
<span class="t k" style="left:258.500px;top:969px">Index</span><span class="t m" style="left:363px;top:970px;width:50px;text-align:right">1.0</span><span class="t" style="left:421px;top:969px">KiB</span>
<span class="t k" style="left:258.500px;top:992px">Overhead</span><span class="t m" style="left:363px;top:993px;width:50px;text-align:right">0</span><span class="t" style="left:421px;top:992px">B</span>
<span class="t k" style="left:258.500px;top:1014px">Effective</span><span class="t m" style="left:363px;top:1015px;width:50px;text-align:right">1.0</span><span class="t" style="left:421px;top:1014px">KiB</span>
<span class="t" style="left:421px;top:1036px">KiB</span>

<div class="b" style="left:484px;top:921px;width:283px;height:23px;background:#d3dce3"></div>
<div class="b" style="left:484px;top:944px;width:283px;height:22px;background:#fff"></div>
<div class="b" style="left:484px;top:966px;width:283px;height:22px;background:#ddd"></div>
<div class="b" style="left:484px;top:988px;width:283px;height:22px;background:#fff"></div>
<div class="b" style="left:484px;top:1010px;width:283px;height:23px;background:#ddd"></div>
<div class="b" style="left:484px;top:1033px;width:283px;height:7px;background:#fff"></div>
<span class="t k" style="left:484px;top:924px;width:283px;text-align:center">Row statistics</span>
<span class="t k" style="left:488px;top:947px">Format</span><span class="t m" style="left:562px;top:948px;width:200.500px;text-align:right">dynamic</span>
<span class="t k" style="left:488px;top:969px">Collation</span><span class="t m" style="left:562px;top:970px;width:200.500px;text-align:right">utf8mb4_general_ci</span>
<span class="t k" style="left:488px;top:992px">Rows</span><span class="t m" style="left:562px;top:993px;width:200.500px;text-align:right">0</span>
<span class="t k" style="left:488px;top:1014px">Next autoindex</span><span class="t m" style="left:562px;top:1015px;width:200.500px;text-align:right">1</span>
<span class="t k" style="left:488px;top:1036px">Creation</span>

<!-- Console -->
<div class="b" style="left:242px;top:1019px;width:80px;height:21px;background:#d0d0d0;border:1px solid #bbb;border-bottom:0;border-radius:3px 3px 0 0;box-shadow:0 0 3px #aaa"></div>
<div class="b" style="left:252px;top:1026px;width:11px;height:10px;background:linear-gradient(135deg,#000,#444);border:1px solid #bbb"></div>
<span class="t" style="left:269.500px;top:1023px;color:#333">Console</span>
</body></html>
